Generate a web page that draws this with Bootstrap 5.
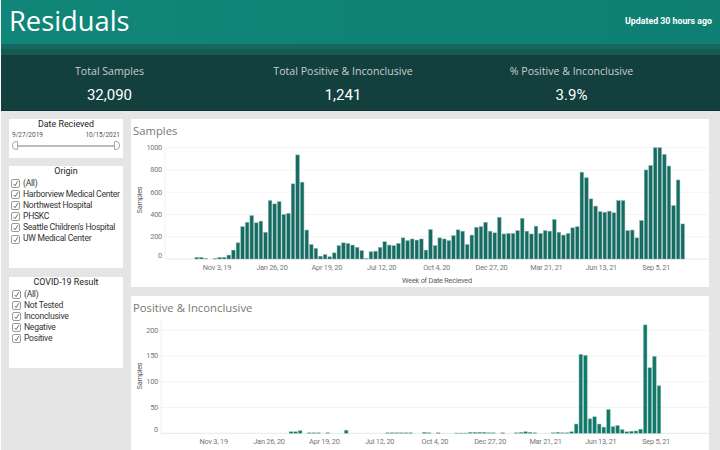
<!DOCTYPE html>
<html lang="en">
<head>
  <meta charset="UTF-8" />
  <title>Residuals</title>
  <link href="https://cdn.jsdelivr.net/npm/bootstrap@5.3.3/dist/css/bootstrap.min.css" rel="stylesheet"/>
  <style>
    html, body {
      height: 100%;
      overflow: hidden;
    }

    body {
      background: #fff;
      font-family: Roboto, sans-serif;
      padding-left: 1px;
    }

    .page-wrap {
      height: 450px;
      background: #e5e5e5;
      overflow: hidden;
    }

    .top-head {
      height: 44px;
      background: linear-gradient(90deg, #108679, #0f7f73);
      color: #fff;
      padding: 0 8px 0 8px;
    }

    .top-head h1 {
      font-family: "Open Sans", sans-serif;
      font-size: 27.3px;
      font-weight: 400;
      margin: 0 0 1px;
    }

    .updated {
      font-size: 8.8px;
      font-weight: 700;
      margin: 0 0 1px 0;
    }

    .band-a { height: 5px; background: #17665f; }
    .band-b { height: 6px; background: #175a54; }

    .kpi-row {
      height: 56px;
      background: #133f3f;
      border-bottom: 1px solid #0e3331;
      color: #fff;
      text-align: center;
    }

    .kpi-a { width: 217px; }
    .kpi-b { width: 250px; }
    .kpi-c { width: 207px; }

    .kpi-label {
      font-family: "Open Sans", sans-serif;
      font-size: 10.6px;
      color: #c3d0ce;
      margin-top: 9px;
      line-height: 15px;
    }

    .kpi-value {
      font-size: 15px;
      margin-top: 5px;
      line-height: 22px;
    }

    .body-row {
      padding: 8px 11px 0 8px;
      gap: 8px;
    }

    .side-col {
      width: 114px;
      flex: none;
      gap: 8px;
      font-size: 8.6px;
      letter-spacing: -.27px;
      color: #333;
    }

    .filter-box {
      background: #fff;
      padding: 0 2px;
      line-height: 11.1px;
    }

    .filter-date { height: 39px; }
    .filter-origin { height: 102px; }
    .filter-result { height: 91px; margin-top: 1px; }

    .filter-title {
      font-size: 8.9px;
      letter-spacing: 0;
      text-align: center;
      line-height: 11px;
      margin-bottom: 1px;
      color: #222;
    }

    .date-ends {
      font-size: 6.5px;
      letter-spacing: 0;
      line-height: 9px;
      color: #555;
      padding: 0 1px;
      margin-top: 1px;
    }

    .date-slide {
      margin-top: 1px;
      padding: 0 1px;
    }

    .date-slide i {
      display: block;
      width: 6px;
      height: 9px;
      background: #fff;
      border: 1px solid #aaa;
    }

    .date-slide i:first-child { border-radius: 4px 0 0 4px; }
    .date-slide i:last-child { border-radius: 0 4px 4px 0; }

    .date-slide b {
      flex: 1;
      height: 2px;
      background: #bbb;
    }

    .tick-row {
      margin: 0;
      padding: 0;
      min-height: 0;
      white-space: nowrap;
      height: 11.1px;
      display: flex;
      align-items: center;
      gap: 3px;
    }

    .tick-row .form-check-input {
      float: none;
      flex: none;
      width: 9px;
      height: 9px;
      margin: 0;
      border: 1px solid #9a9a9a;
      border-radius: 2px;
      opacity: 1;
      background-color: #fff;
      background-size: 8px;
      background-image: url("data:image/svg+xml,%3csvg xmlns='http://www.w3.org/2000/svg' viewBox='0 0 8 8'%3e%3cpath fill='none' stroke='%23555' stroke-width='.8' d='M2 4.2l1.4 1.6L6 1.6'/%3e%3c/svg%3e");
    }

    .filter-result .tick-row { padding-left: 1px; }

    .chart-col { min-width: 0; gap: 9px; }

    .chart-box { background: #fff; }
    .chart-one { height: 168px; }
    .chart-two { height: 160px; }

    .chart-title {
      font-family: "Open Sans", sans-serif;
      font-size: 11.3px;
      line-height: 20px;
      color: #7b7773;
      padding: 2px 0 0 2px;
      height: 20px;
    }

    .chart-box svg { display: block; }

    .chart-box text {
      font-family: Roboto, sans-serif;
      font-size: 7.4px;
      letter-spacing: -.25px;
      fill: #777;
    }

    .chart-box text.axis-name { fill: #5c5c5c; }
  </style>
</head>
<body>
  <div class="page-wrap">
    <div class="top-head d-flex justify-content-between align-items-center">
      <h1>Residuals</h1>
      <p class="updated">Updated 30 hours ago</p>
    </div>
    <div class="band-a"></div>
    <div class="band-b"></div>
    <div class="kpi-row d-flex">
      <div class="kpi-a"><div class="kpi-label">Total Samples</div><div class="kpi-value">32,090</div></div>
      <div class="kpi-b"><div class="kpi-label">Total Positive &amp; Inconclusive</div><div class="kpi-value">1,241</div></div>
      <div class="kpi-c"><div class="kpi-label">% Positive &amp; Inconclusive</div><div class="kpi-value">3.9%</div></div>
    </div>

    <div class="body-row d-flex">
      <div class="side-col d-flex flex-column">
        <div class="filter-box filter-date">
          <div class="filter-title">Date Recieved</div>
          <div class="date-ends d-flex justify-content-between"><span>9/27/2019</span><span>10/15/2021</span></div>
          <div class="date-slide d-flex align-items-center"><i></i><b></b><i></i></div>
        </div>
        <div class="filter-box filter-origin">
          <div class="filter-title">Origin</div>
          <label class="tick-row"><input class="form-check-input" type="checkbox" checked>(All)</label>
          <label class="tick-row"><input class="form-check-input" type="checkbox" checked>Harborview Medical Center</label>
          <label class="tick-row"><input class="form-check-input" type="checkbox" checked>Northwest Hospital</label>
          <label class="tick-row"><input class="form-check-input" type="checkbox" checked>PHSKC</label>
          <label class="tick-row"><input class="form-check-input" type="checkbox" checked>Seattle Children's Hospital</label>
          <label class="tick-row"><input class="form-check-input" type="checkbox" checked>UW Medical Center</label>
        </div>
        <div class="filter-box filter-result">
          <div class="filter-title">COVID-19 Result</div>
          <label class="tick-row"><input class="form-check-input" type="checkbox" checked>(All)</label>
          <label class="tick-row"><input class="form-check-input" type="checkbox" checked>Not Tested</label>
          <label class="tick-row"><input class="form-check-input" type="checkbox" checked>Inconclusive</label>
          <label class="tick-row"><input class="form-check-input" type="checkbox" checked>Negative</label>
          <label class="tick-row"><input class="form-check-input" type="checkbox" checked>Positive</label>
        </div>
      </div>

      <div class="chart-col flex-grow-1 d-flex flex-column">
        <div class="chart-box chart-one">
          <div class="chart-title">Samples</div>
          <svg id="chartSamples" width="578" height="148"></svg>
        </div>
        <div class="chart-box chart-two">
          <div class="chart-title">Positive &amp; Inconclusive</div>
          <svg id="chartPositive" width="578" height="140"></svg>
        </div>
      </div>
    </div>
  </div>

  <script>
    const samples = [15,15,5,0,5,15,15,35,80,145,290,330,390,325,340,240,525,495,515,400,410,675,935,690,260,130,95,25,40,20,
      55,120,145,140,125,105,75,5,65,70,105,155,125,120,140,190,165,180,170,180,80,265,120,190,180,165,210,262,250,130,215,285,290,330,250,235,375,225,230,230,255,365,250,
      225,295,230,255,250,355,240,215,230,280,290,780,730,540,475,425,420,430,415,525,525,255,260,190,345,800,840,1000,1000,940,835,480,710,315];

    const positive = [0,0,0,0,0,0,0,0,0,0,0,0,0,0,0,0,0,0,0,0,0,3,3,5,0,1,1,1,0,1,0,0,0,6,0,0,0,0,0,0,0,0,1,1,1,1,1,1,0,0,2,1,0,1,0,0,0,.5,.5,.5,
      2,2,2,2,1,1,0,1,0,0,1,2,3,2,1,0,0,0,1,2,1,1,3,18,153,151,28,32,18,12,46,13,15,7,3,4,4.5,8,210,127,149,92];

    const ns = 'http://www.w3.org/2000/svg';
    const tickNames = ['Nov 3, 19','Jan 26, 20','Apr 19, 20','Jul 12, 20','Oct 4, 20','Dec 27, 20','Mar 21, 21','Jun 13, 21','Sep 5, 21'];

    function add(svg, tag, attrs, label) {
      const el = document.createElementNS(ns, tag);
      for (const k in attrs) el.setAttribute(k, attrs[k]);
      if (label) el.textContent = label;
      svg.appendChild(el);
      return el;
    }

    function drawChart(id, o) {
      const svg = document.getElementById(id);
      add(svg, 'line', { x1: o.left, x2: o.left, y1: o.top, y2: o.base, stroke: '#f0f0f0' });
      o.grid.forEach(v => {
        const y = o.base - v * o.scale;
        add(svg, 'line', { x1: o.left, x2: 578, y1: y, y2: y, stroke: v ? '#f4f4f4' : '#e8e8e8' });
        add(svg, 'text', { x: o.left - 3, y: (v ? y : y - 4) + 2.5, 'text-anchor': 'end' }, String(v));
      });
      o.data.forEach((v, i) => {
        if (!v) return;
        const h = v * o.scale;
        add(svg, 'rect', { x: o.x0 + i * o.pitch - 1.8, y: o.base - h, width: 3.6, height: h, fill: o.color, stroke: o.edge, 'stroke-width': 0.5 });
      });
      tickNames.forEach((t, i) => {
        add(svg, 'text', { x: o.tick0 + i * o.tickStep, y: o.base + 10.5, 'text-anchor': 'middle' }, t);
      });
      add(svg, 'text', { class: 'axis-name', x: 0, y: 0, 'text-anchor': 'middle', transform: 'translate(10.5,' + o.nameY + ') rotate(-90)' }, 'Samples');
    }

    drawChart('chartSamples', {
      data: samples, left: 34, top: 8, base: 120, scale: 0.1113, grid: [0, 200, 400, 600, 800, 1000],
      x0: 65.7, pitch: 4.585, color: '#146c63', edge: '#8fb5af', tick0: 86, tickStep: 54.9, nameY: 61
    });
    add(document.getElementById('chartSamples'), 'text', { class: 'axis-name', x: 306, y: 143.7, 'text-anchor': 'middle' }, 'Week of Date Recieved');

    drawChart('chartPositive', {
      data: positive, left: 30, top: 4, base: 117.3, scale: 0.516, grid: [0, 50, 100, 150, 200],
      x0: 63.4, pitch: 4.6, color: '#0f7a6c', edge: '#8cbdb5', tick0: 82.7, tickStep: 55.3, nameY: 60
    });
  </script>
  <script src="https://cdn.jsdelivr.net/npm/bootstrap@5.3.3/dist/js/bootstrap.bundle.min.js"></script>
</body>
</html>
